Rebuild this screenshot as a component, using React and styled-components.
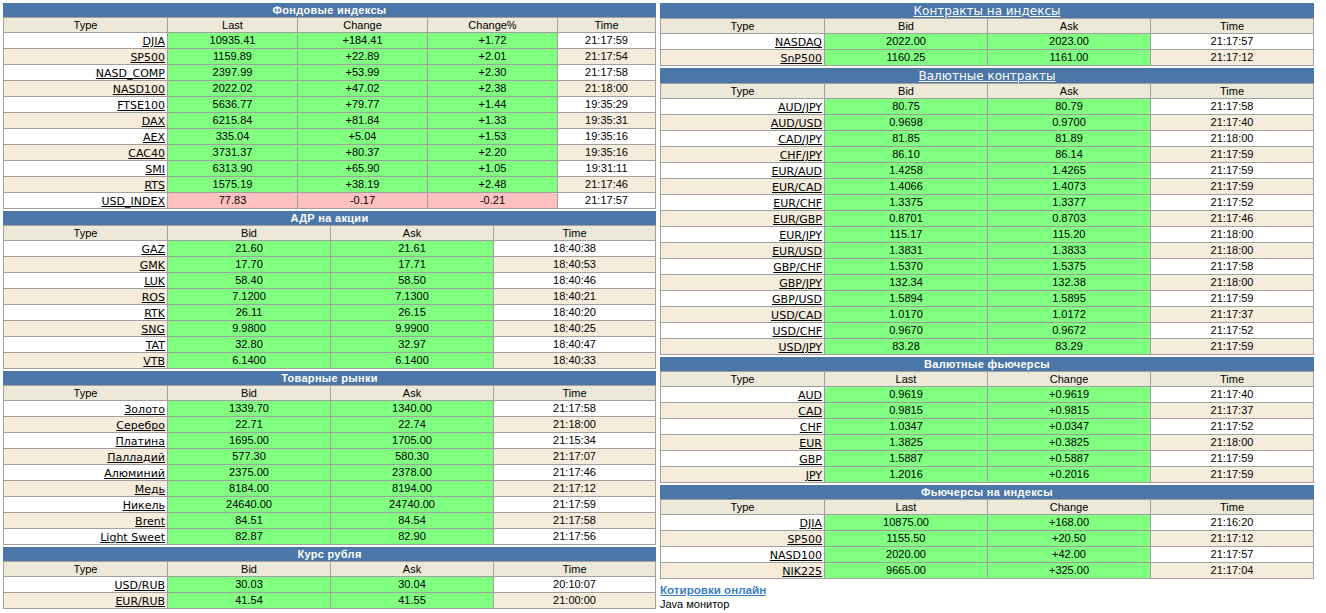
import React from 'react';
import styled, { createGlobalStyle } from 'styled-components';

const GlobalStyle = createGlobalStyle`
  html, body {
    margin: 0;
    padding: 0;
    background: #fff;
    overflow: hidden;
  }
  body {
    font-family: "Liberation Sans", Arial, sans-serif;
    font-size: 11px;
    color: #000;
  }
`;

const Page = styled.div`
  display: grid;
  grid-template-columns: 652px 653px;
  column-gap: 5px;
  padding: 3px 0 0 3px;
  width: 1320px;
`;

const Column = styled.div`
  display: flex;
  flex-direction: column;
  gap: 2px;
`;

const QuoteTable = styled.table`
  width: 100%;
  table-layout: fixed;
  border-collapse: collapse;
  font-size: 11px;
  line-height: 13px;
`;

const TitleCell = styled.th`
  background: #4a76a8;
  color: #fff;
  height: ${(p) => (p.$big ? '13px' : '14px')};
  padding: ${(p) => (p.$big ? '2px 0 0' : '0')};
  font-family: ${(p) => (p.$big ? '"DejaVu Sans", sans-serif' : 'inherit')};
  font-size: ${(p) => (p.$big ? '12px' : '11px')};
  font-weight: ${(p) => (p.$big ? 'normal' : 'bold')};
  letter-spacing: ${(p) => (p.$big ? '0' : '0.3px')};
  line-height: 13px;
  text-align: center;
  border: 1px solid #4a76a8;
  border-top: none;
  border-bottom-color: #a0a0a0;
`;

const TitleLink = styled.a`
  color: #fff;
  text-decoration: underline;
`;

const HeadCell = styled.th`
  background: #ece9d8;
  height: 14px;
  padding: 0;
  font-weight: normal;
  text-align: center;
  border: 1px solid #a0a0a0;
`;

const TypeCell = styled.td`
  background: ${(p) => (p.$odd ? '#f5ecdc' : '#fff')};
  height: 13px;
  padding: 2px 2px 0 0;
  font-family: "DejaVu Sans", sans-serif;
  font-size: 11px;
  line-height: 13px;
  text-align: right;
  border: 1px solid #a0a0a0;
`;

const TypeLink = styled.a`
  color: #000;
  text-decoration: underline;
`;

const ValueCell = styled.td`
  background: ${(p) => (p.$down ? '#ffc0c0' : '#80ff80')};
  padding: 0;
  text-align: center;
  border: 1px solid #a0a0a0;
`;

const TimeCell = styled.td`
  background: ${(p) => (p.$odd ? '#f5ecdc' : '#fff')};
  padding: 0;
  text-align: center;
  border: 1px solid #a0a0a0;
`;

const OnlineBlock = styled.div`
  margin-top: 2px;
  line-height: 14px;
`;

const OnlineLink = styled.a`
  display: block;
  color: #3b7fc4;
  font-size: 11.6px;
  font-weight: bold;
  text-decoration: underline;
`;

const Quotes = ({ title, big, widths, head, rows }) => (
  <QuoteTable>
    <colgroup>
      {widths.map((w, i) => (
        <col key={i} style={{ width: w }} />
      ))}
    </colgroup>
    <thead>
      <tr>
        <TitleCell colSpan={head.length} $big={big}>
          {big ? <TitleLink href="#">{title}</TitleLink> : title}
        </TitleCell>
      </tr>
      <tr>
        {head.map((h) => (
          <HeadCell key={h}>{h}</HeadCell>
        ))}
      </tr>
    </thead>
    <tbody>
      {rows.map((r, i) => {
        const time = r[r.length - 1];
        const values = r.slice(1, -1);
        const down = values.some((v) => v.startsWith('-'));
        return (
          <tr key={r[0]}>
            <TypeCell $odd={i % 2 === 1}>
              <TypeLink href="#">{r[0]}</TypeLink>
            </TypeCell>
            {values.map((v, j) => (
              <ValueCell key={j} $down={down}>{v}</ValueCell>
            ))}
            <TimeCell $odd={i % 2 === 1}>{time}</TimeCell>
          </tr>
        );
      })}
    </tbody>
  </QuoteTable>
);

const wide = [164, 130, 130, 130, 98];
const left4 = [164, 163, 163, 162];
const right4 = [164, 163, 163, 163];

const indexes = [
  ['DJIA', '10935.41', '+184.41', '+1.72', '21:17:59'],
  ['SP500', '1159.89', '+22.89', '+2.01', '21:17:54'],
  ['NASD_COMP', '2397.99', '+53.99', '+2.30', '21:17:58'],
  ['NASD100', '2022.02', '+47.02', '+2.38', '21:18:00'],
  ['FTSE100', '5636.77', '+79.77', '+1.44', '19:35:29'],
  ['DAX', '6215.84', '+81.84', '+1.33', '19:35:31'],
  ['AEX', '335.04', '+5.04', '+1.53', '19:35:16'],
  ['CAC40', '3731.37', '+80.37', '+2.20', '19:35:16'],
  ['SMI', '6313.90', '+65.90', '+1.05', '19:31:11'],
  ['RTS', '1575.19', '+38.19', '+2.48', '21:17:46'],
  ['USD_INDEX', '77.83', '-0.17', '-0.21', '21:17:57'],
];

const adr = [
  ['GAZ', '21.60', '21.61', '18:40:38'],
  ['GMK', '17.70', '17.71', '18:40:53'],
  ['LUK', '58.40', '58.50', '18:40:46'],
  ['ROS', '7.1200', '7.1300', '18:40:21'],
  ['RTK', '26.11', '26.15', '18:40:20'],
  ['SNG', '9.9800', '9.9900', '18:40:25'],
  ['TAT', '32.80', '32.97', '18:40:47'],
  ['VTB', '6.1400', '6.1400', '18:40:33'],
];

const commodities = [
  ['Золото', '1339.70', '1340.00', '21:17:58'],
  ['Серебро', '22.71', '22.74', '21:18:00'],
  ['Платина', '1695.00', '1705.00', '21:15:34'],
  ['Палладий', '577.30', '580.30', '21:17:07'],
  ['Алюминий', '2375.00', '2378.00', '21:17:46'],
  ['Медь', '8184.00', '8194.00', '21:17:12'],
  ['Никель', '24640.00', '24740.00', '21:17:59'],
  ['Brent', '84.51', '84.54', '21:17:58'],
  ['Light Sweet', '82.87', '82.90', '21:17:56'],
];

const rouble = [
  ['USD/RUB', '30.03', '30.04', '20:10:07'],
  ['EUR/RUB', '41.54', '41.55', '21:00:00'],
];

const indexContracts = [
  ['NASDAQ', '2022.00', '2023.00', '21:17:57'],
  ['SnP500', '1160.25', '1161.00', '21:17:12'],
];

const fxContracts = [
  ['AUD/JPY', '80.75', '80.79', '21:17:58'],
  ['AUD/USD', '0.9698', '0.9700', '21:17:40'],
  ['CAD/JPY', '81.85', '81.89', '21:18:00'],
  ['CHF/JPY', '86.10', '86.14', '21:17:59'],
  ['EUR/AUD', '1.4258', '1.4265', '21:17:59'],
  ['EUR/CAD', '1.4066', '1.4073', '21:17:59'],
  ['EUR/CHF', '1.3375', '1.3377', '21:17:52'],
  ['EUR/GBP', '0.8701', '0.8703', '21:17:46'],
  ['EUR/JPY', '115.17', '115.20', '21:18:00'],
  ['EUR/USD', '1.3831', '1.3833', '21:18:00'],
  ['GBP/CHF', '1.5370', '1.5375', '21:17:58'],
  ['GBP/JPY', '132.34', '132.38', '21:18:00'],
  ['GBP/USD', '1.5894', '1.5895', '21:17:59'],
  ['USD/CAD', '1.0170', '1.0172', '21:17:37'],
  ['USD/CHF', '0.9670', '0.9672', '21:17:52'],
  ['USD/JPY', '83.28', '83.29', '21:17:59'],
];

const fxFutures = [
  ['AUD', '0.9619', '+0.9619', '21:17:40'],
  ['CAD', '0.9815', '+0.9815', '21:17:37'],
  ['CHF', '1.0347', '+0.0347', '21:17:52'],
  ['EUR', '1.3825', '+0.3825', '21:18:00'],
  ['GBP', '1.5887', '+0.5887', '21:17:59'],
  ['JPY', '1.2016', '+0.2016', '21:17:59'],
];

const indexFutures = [
  ['DJIA', '10875.00', '+168.00', '21:16:20'],
  ['SP500', '1155.50', '+20.50', '21:17:12'],
  ['NASD100', '2020.00', '+42.00', '21:17:57'],
  ['NIK225', '9665.00', '+325.00', '21:17:04'],
];

const App = () => {
  return (
    <>
      <GlobalStyle />
      <Page>
        <Column>
          <Quotes title="Фондовые индексы" widths={wide} head={['Type', 'Last', 'Change', 'Change%', 'Time']} rows={indexes} />
          <Quotes title="АДР на акции" widths={left4} head={['Type', 'Bid', 'Ask', 'Time']} rows={adr} />
          <Quotes title="Товарные рынки" widths={left4} head={['Type', 'Bid', 'Ask', 'Time']} rows={commodities} />
          <Quotes title="Курс рубля" widths={left4} head={['Type', 'Bid', 'Ask', 'Time']} rows={rouble} />
        </Column>
        <Column>
          <Quotes big title="Контракты на индексы" widths={right4} head={['Type', 'Bid', 'Ask', 'Time']} rows={indexContracts} />
          <Quotes big title="Валютные контракты" widths={right4} head={['Type', 'Bid', 'Ask', 'Time']} rows={fxContracts} />
          <Quotes title="Валютные фьючерсы" widths={right4} head={['Type', 'Last', 'Change', 'Time']} rows={fxFutures} />
          <Quotes title="Фьючерсы на индексы" widths={right4} head={['Type', 'Last', 'Change', 'Time']} rows={indexFutures} />
          <OnlineBlock>
            <OnlineLink href="#">Котировки онлайн</OnlineLink>
            Java монитор
          </OnlineBlock>
        </Column>
      </Page>
    </>
  );
};

export default App;
